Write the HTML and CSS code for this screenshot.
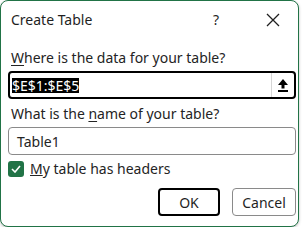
FILE: index.html
```html
<!DOCTYPE html>
<html lang="en">
<head>
    <meta charset="UTF-8">
    <title>Create Table</title>
    <link rel="stylesheet" href="styles.css">
</head>
<body>
    <div class="dialogo">
        <!-- Barra de titulo -->
        <div class="titulo">
            <span class="titulo-texto">Create Table</span>
            <span class="ayuda">?</span>
            <svg class="cerrar" width="14" height="14" viewBox="0 0 14 14">
                <path d="M1 1 L13 13 M13 1 L1 13" stroke="#1f1f1f" stroke-width="1.3" fill="none"/>
            </svg>
        </div>

        <div class="contenido">
            <div class="etiqueta etiqueta-rango"><u>W</u>here is the data for your table?</div>
            <div class="campo campo-rango">
                <span class="seleccion">$E$1:$E$5</span>
                <span class="btn-rango">
                    <svg width="10" height="13" viewBox="0 0 10 13">
                        <path d="M5 0 L10 6 L6.5 6 L6.5 9.5 L3.5 9.5 L3.5 6 L0 6 Z" fill="#000"/>
                        <rect x="0" y="11" width="10" height="2" fill="#000"/>
                    </svg>
                </span>
            </div>

            <div class="etiqueta etiqueta-nombre">What is the <u>n</u>ame of your table?</div>
            <div class="campo campo-nombre">Table1</div>

            <div class="check-fila">
                <span class="check">
                    <svg width="10" height="8" viewBox="0 0 10 8">
                        <path d="M1 4 L4 7 L9 1" stroke="#fff" stroke-width="1.6" fill="none"/>
                    </svg>
                </span>
                <span><u>M</u>y table has headers</span>
            </div>

            <div class="botones">
                <button class="btn btn-ok">OK</button>
                <button class="btn btn-cancel">Cancel</button>
            </div>
        </div>
    </div>
</body>
</html>
```

FILE: styles.css
```css
body {
    margin: 0;
    background-color: #ffffff;
    font-family: 'Noto Sans', sans-serif;
    font-size: 14px;
    color: #242424;
}

.dialogo {
    width: 299px;
    height: 227px;
    box-sizing: border-box;
    border: 1px solid #217346;
    border-radius: 8px;
    background: #ffffff;
    box-shadow: 0 1px 3px rgba(0,0,0,0.25);
    display: flex;
    flex-direction: column;
}

.titulo {
    height: 37px;
    display: flex;
    align-items: center;
    padding-left: 10px;
    color: #1f1f1f;
}

.titulo-texto {
    flex: 1;
}

.ayuda {
    margin-right: 47px;
}

.cerrar {
    margin-right: 18px;
}

.contenido {
    padding: 0 2px 0 7px;
}

.etiqueta {
    padding-left: 3px;
    line-height: 20px;
}

.etiqueta u {
    text-underline-offset: 2px;
}

.etiqueta-rango {
    margin-top: 10px;
}

.campo {
    box-sizing: border-box;
    height: 28px;
    display: flex;
    align-items: center;
}

.campo-rango {
    margin-top: 3px;
    border: 2px solid #000;
    border-radius: 4px;
    padding-left: 2px;
}

.seleccion {
    background: #000;
    color: #fff;
    line-height: 15px;
    margin-right: auto;
}

.btn-rango {
    flex-shrink: 0;
    width: 22px;
    height: 100%;
    border-left: 1px solid #d6d6d6;
    display: flex;
    align-items: center;
    justify-content: center;
}

.etiqueta-nombre {
    margin-top: 5px;
}

.campo-nombre {
    margin-top: 3px;
    border: 1px solid #8a8a8a;
    border-radius: 4px;
    padding-left: 8px;
}

.check-fila {
    margin-top: 4px;
    display: flex;
    align-items: center;
    gap: 6px;
    line-height: 20px;
}

.check {
    width: 16px;
    height: 16px;
    border-radius: 3px;
    background: #217346;
    display: flex;
    align-items: center;
    justify-content: center;
}

.botones {
    display: flex;
    justify-content: flex-end;
    gap: 12px;
    margin-top: 9px;
}

.btn {
    font-family: 'Noto Sans', sans-serif;
    font-size: 14px;
    color: #1f1f1f;
    background: #fff;
    height: 28px;
    border-radius: 4px;
    padding: 0;
}

.btn-ok {
    width: 62px;
    border: 2px solid #000;
}

.btn-cancel {
    width: 64px;
    border: 1px solid #8a8a8a;
}
```
